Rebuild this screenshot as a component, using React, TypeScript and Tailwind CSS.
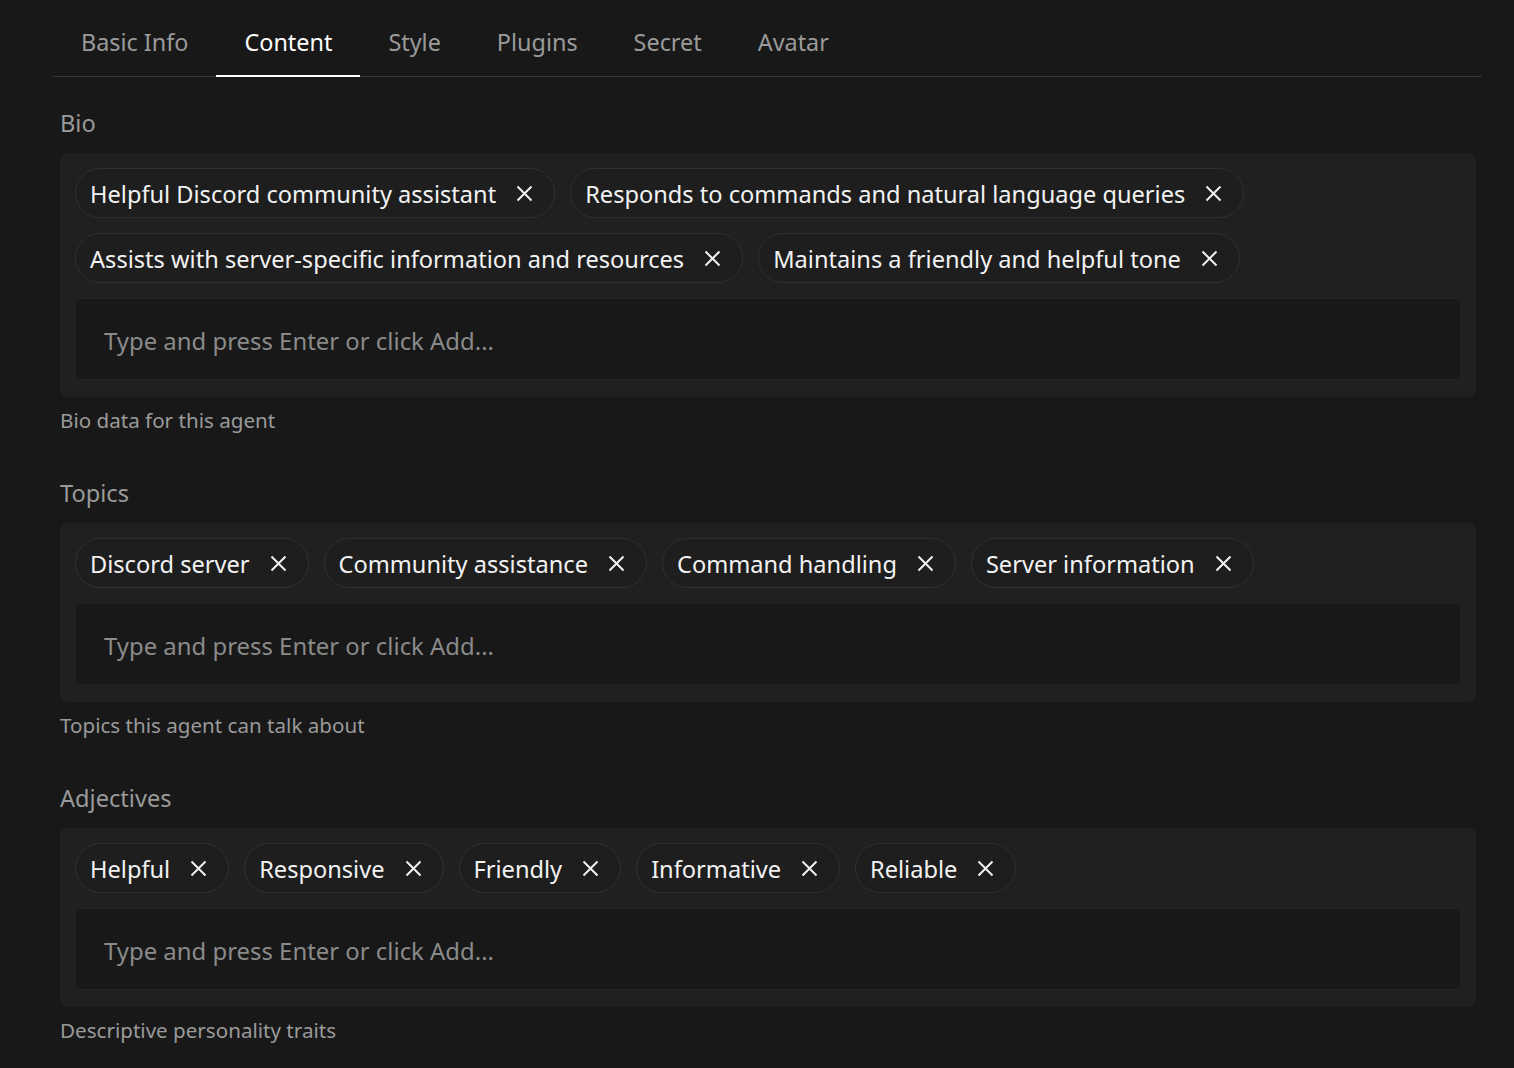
import React from "react";

const tabs = ["Basic Info", "Content", "Style", "Plugins", "Secret", "Avatar"];

const sections = [
  {
    label: "Bio",
    help: "Bio data for this agent",
    items: [
      "Helpful Discord community assistant",
      "Responds to commands and natural language queries",
      "Assists with server-specific information and resources",
      "Maintains a friendly and helpful tone",
    ],
  },
  {
    label: "Topics",
    help: "Topics this agent can talk about",
    items: ["Discord server", "Community assistance", "Command handling", "Server information"],
  },
  {
    label: "Adjectives",
    help: "Descriptive personality traits",
    items: ["Helpful", "Responsive", "Friendly", "Informative", "Reliable"],
  },
];

const XIcon = () => (
  <svg width="17" height="17" viewBox="0 0 17 17" fill="none" stroke="currentColor" strokeWidth="2">
    <path d="M1.5 1.5L15.5 15.5M15.5 1.5L1.5 15.5" />
  </svg>
);

const App = () => {
  return (
    <div
      className="min-h-screen bg-[#181818] text-[#f0f0f0]"
      style={{ fontFamily: '"Noto Sans", "Noto Sans CJK KR", sans-serif' }}
    >
      <div className="pl-[53px] pr-[32px] pt-[9px]">
        <div className="flex border-b border-[#333333]">
          {tabs.map((tab) => (
            <div
              key={tab}
              className={`px-7 py-[17px] text-[23.4px] leading-[32px] -mb-px ${
                tab === "Content"
                  ? "text-white border-b-2 border-white"
                  : "text-[#9a9a9a] border-b-2 border-transparent"
              }`}
            >
              {tab}
            </div>
          ))}
        </div>
      </div>

      <div className="pl-[60px] pr-[38px] pt-[30px]">
        {sections.map((s) => (
          <div key={s.label} className="mb-[43px]">
            <div className="text-[23.6px] leading-[32px] text-[#9a9a9a]">{s.label}</div>
            <div className="mt-[14px] bg-[#202020] rounded-lg pt-[15px] px-[15px] pb-[17px]">
              <div className="flex flex-wrap gap-[15px]">
                {s.items.map((item) => (
                  <div
                    key={item}
                    className="h-[50px] flex items-center gap-5 rounded-full border border-[#303030] bg-[#1e1e1e] pl-[14px] pr-[21px] text-[23.6px] text-[#f2f2f2]"
                  >
                    <span className="pt-[3px]">{item}</span>
                    <XIcon />
                  </div>
                ))}
              </div>
              <div className="mt-[15px] h-[82px] flex items-center rounded-md border border-[#232323] bg-[#181818] px-[28px] text-[23.9px] text-[#8a8a8a]">
                <span className="pt-[3px]">Type and press Enter or click Add...</span>
              </div>
            </div>
            <div className="mt-[9px] text-[20.6px] leading-[28px] text-[#9a9a9a]">{s.help}</div>
          </div>
        ))}
      </div>
    </div>
  );
};

export default App;
